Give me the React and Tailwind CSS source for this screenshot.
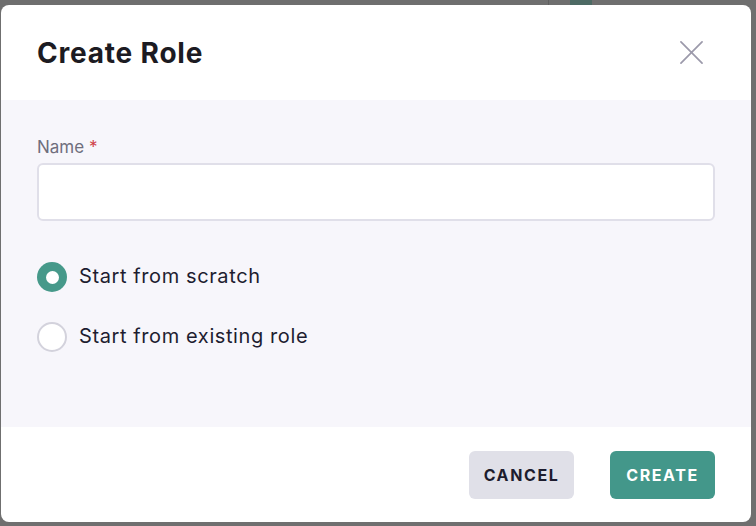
import React, { useState } from 'react';

const options = [
  { id: 'scratch', label: 'Start from scratch' },
  { id: 'existing', label: 'Start from existing role' },
];

function Radio({ checked }) {
  return checked ? (
    <span className="flex h-[30px] w-[30px] items-center justify-center rounded-full bg-[#46998a]">
      <span className="h-[13px] w-[13px] rounded-full bg-white" />
    </span>
  ) : (
    <span className="h-[30px] w-[30px] rounded-full border-2 border-[#d3d2dc] bg-white" />
  );
}

export default function App() {
  const [choice, setChoice] = useState('scratch');
  const [name, setName] = useState('');

  return (
    <div className="relative h-[526px] w-[756px] overflow-hidden bg-[#6f6f6f] pl-[1px] pt-[5px] font-['Inter',sans-serif]">
      {/* page behind the overlay */}
      <div className="absolute left-[548px] top-0 h-[5px] w-[1px] bg-[#5f5f5f]" />
      <div className="absolute left-[570px] top-0 h-[5px] w-[22px] bg-[#4d6a64]" />

      <div className="relative flex h-[517px] w-[750px] flex-col overflow-hidden rounded-lg bg-white">
        <div className="flex h-[95px] items-center justify-between px-[36px]">
          <h2 className="text-[28px] font-bold tracking-[0.8px] text-[#1c1b22]">Create Role</h2>
          <button className="mr-[12px] text-[#9c9aab]">
            <svg width="23" height="23" viewBox="0 0 24 24" fill="none" stroke="currentColor" strokeWidth="1.8" strokeLinecap="round">
              <path d="M1 1L23 23M23 1L1 23" />
            </svg>
          </button>
        </div>

        <div className="flex-1 bg-[#f7f6fb] px-[36px] pt-[35px]">
          <label className="block text-[17px] leading-6 text-[#6f6e7d]">
            Name <span className="text-[#cf4148]">*</span>
          </label>
          <input
            value={name}
            onChange={(e) => setName(e.target.value)}
            className="mt-[4px] block h-[58px] w-full rounded-md border-2 border-[#e0dfe9] bg-white px-3 outline-none"
          />

          <div className="mt-[41px] flex flex-col gap-[30px]">
            {options.map((o) => (
              <div key={o.id} onClick={() => setChoice(o.id)} className="flex h-[30px] cursor-pointer items-center gap-[12px]">
                <Radio checked={choice === o.id} />
                <span className="-mt-[2px] text-[20px] tracking-[0.6px] text-[#1e1d30]">{o.label}</span>
              </div>
            ))}
          </div>
        </div>

        <div className="flex h-[95px] items-center justify-end gap-[36px] pr-[36px]">
          <button className="h-[48px] w-[105px] rounded-md bg-[#e0e0e8] text-[16px] font-bold tracking-[1.6px] text-[#1d1c2e]">
            CANCEL
          </button>
          <button className="h-[48px] w-[105px] rounded-md bg-[#43978a] text-[16px] font-bold tracking-[1.6px] text-white">
            CREATE
          </button>
        </div>
      </div>
    </div>
  );
}
